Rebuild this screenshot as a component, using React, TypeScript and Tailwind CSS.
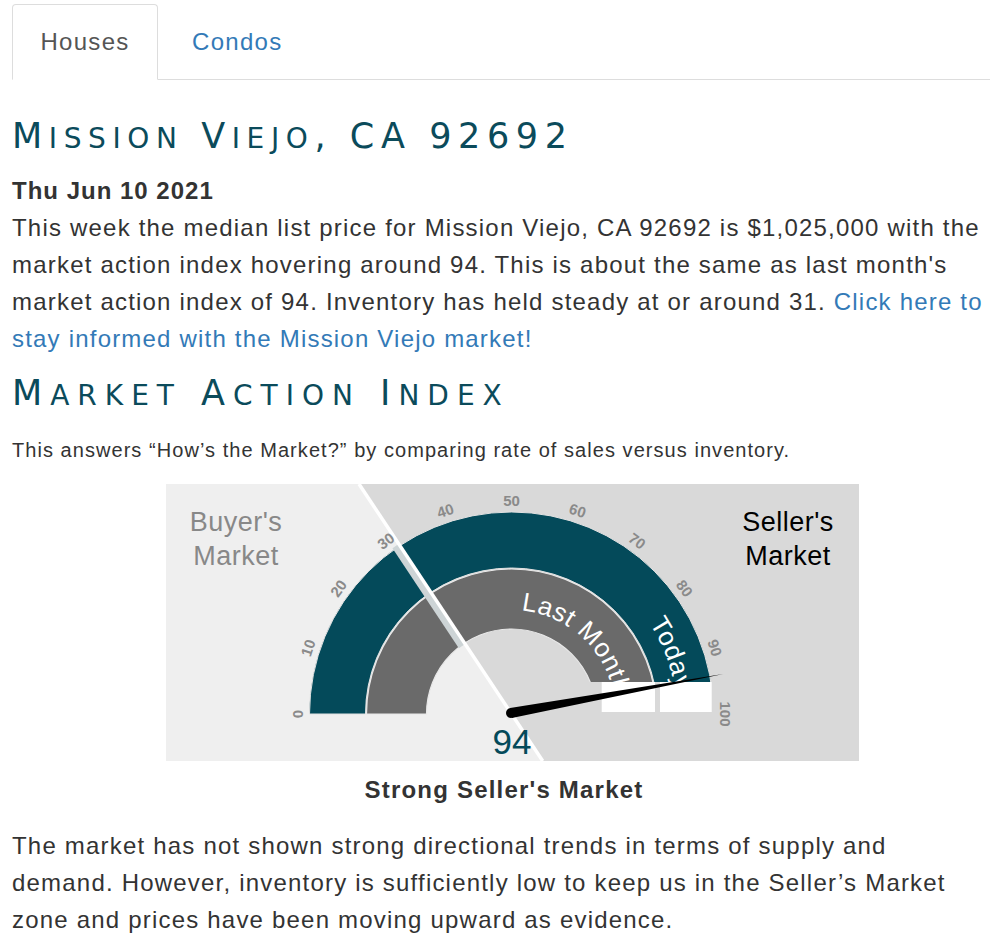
import React from "react";

const TEAL = "#044a5a";
const cx = 345.5;
const cy = 230;

function halfRing(r1: number, r2: number) {
  return `M ${cx - r2} ${cy} A ${r2} ${r2} 0 0 1 ${cx + r2} ${cy} L ${cx + r1} ${cy} A ${r1} ${r1} 0 0 0 ${cx - r1} ${cy} Z`;
}

// clockwise arc used as a text path (left to right over the top)
function arcPath(r: number, fromVal: number) {
  const a = Math.PI - (fromVal / 100) * Math.PI;
  const x = cx + r * Math.cos(a);
  const y = cy - r * Math.sin(a);
  return `M ${x} ${y} A ${r} ${r} 0 0 1 ${cx + r} ${cy}`;
}

function SmallCaps({ text }: { text: string }) {
  const parts = text.split(/([a-z]+)/);
  return (
    <>
      {parts.map((p, i) =>
        /^[a-z]+$/.test(p) ? (
          <span key={i} className="text-[0.8em] uppercase">
            {p}
          </span>
        ) : (
          <span key={i}>{p}</span>
        )
      )}
    </>
  );
}

const FONT = "Liberation Sans, Arial, sans-serif";

function Gauge() {
  const ticks = [0, 10, 20, 30, 40, 50, 60, 70, 80, 90, 100];
  const u = { x: -0.553, y: -0.833 };
  const off = { x: -3.3, y: 2.2 };
  return (
    <svg width="693" height="277" viewBox="0 0 693 277" className="block">
      <defs>
        <path id="lastMonth" d={arcPath(104, 53)} />
        <path id="today" d={arcPath(165, 81.5)} />
      </defs>
      {/* backgrounds */}
      <polygon points="0,0 193,0 376.7,277 0,277" fill="#efefef" />
      <polygon points="193,0 693,0 693,277 376.7,277" fill="#d9d9d9" />

      {/* bands */}
      <path d={halfRing(146, 202)} fill={TEAL} stroke="#e2e2e2" strokeWidth="1" />
      <path d={halfRing(85, 145)} fill="#6a6a6a" stroke="#e8e8e8" strokeWidth="1.2" />

      <text fontFamily={FONT} fontSize="26" letterSpacing="0.6" fill="#fff">
        <textPath href="#lastMonth">Last Month</textPath>
      </text>
      <text fontFamily={FONT} fontSize="26" letterSpacing="0.6" fill="#fff">
        <textPath href="#today">Today</textPath>
      </text>

      {/* bottom right cap */}
      <rect x="420" y="198" width="133" height="34" fill="#d9d9d9" />
      <rect x="435.7" y="198" width="53.3" height="30" fill="#fff" />
      <rect x="494" y="198" width="51.7" height="30" fill="#fff" />

      {/* split line */}
      <line
        x1={cx + u.x * 84 + off.x}
        y1={cy + u.y * 84 + off.y}
        x2={cx + u.x * 204 + off.x}
        y2={cy + u.y * 204 + off.y}
        stroke="#cdd4d6"
        strokeWidth="7"
      />
      <line x1="193" y1="0" x2="376.7" y2="277" stroke="#fff" strokeWidth="3.5" />

      {/* ticks */}
      {ticks.map((v) => {
        const a = Math.PI - (v / 100) * Math.PI;
        const x = cx + 214 * Math.cos(a);
        const y = cy - 214 * Math.sin(a);
        return (
          <text
            key={v}
            x={x}
            y={y}
            transform={`rotate(${v * 1.8 - 90} ${x} ${y})`}
            textAnchor="middle"
            dominantBaseline="central"
            fontFamily={FONT}
            fontWeight="bold"
            fontSize="15"
            fill="#8a8a8a"
          >
            {v}
          </text>
        );
      })}

      {/* market labels */}
      <text x="70" y="47" textAnchor="middle" fontFamily={FONT} fontSize="27" letterSpacing="0.5" fill="#888">
        Buyer's
      </text>
      <text x="70" y="81" textAnchor="middle" fontFamily={FONT} fontSize="27" letterSpacing="0.5" fill="#888">
        Market
      </text>
      <text x="622" y="47" textAnchor="middle" fontFamily={FONT} fontSize="27" letterSpacing="0.5" fill="#000">
        Seller's
      </text>
      <text x="622" y="81" textAnchor="middle" fontFamily={FONT} fontSize="27" letterSpacing="0.5" fill="#000">
        Market
      </text>

      {/* needle */}
      <polygon points="345.9,233.9 557.3,190 344.1,224.1" fill="#000" />
      <circle cx="345" cy="229" r="5" fill="#000" />

      <text x="346" y="270" textAnchor="middle" fontFamily={FONT} fontSize="35" fill={TEAL}>
        94
      </text>
    </svg>
  );
}

export default function App() {
  return (
    <div className="bg-white pl-3 pr-[10px] pb-10 font-['Liberation_Sans',Arial,sans-serif] text-[#333]">
      <div className="flex border-b border-[#ddd] pt-1">
        <div className="-mb-px flex h-[76px] w-[146px] items-center justify-center rounded-t-[4px] border border-[#ddd] border-b-white bg-white text-[24px] tracking-[1.3px] text-[#555]">
          Houses
        </div>
        <div className="ml-[2px] flex h-[75px] items-center px-[32px] text-[24px] tracking-[1.3px] text-[#337ab7]">
          Condos
        </div>
      </div>

      <h1 className="mt-[34px] font-['DejaVu_Sans',sans-serif] text-[35px] leading-[44px] tracking-[6.6px] text-[#0b4b5b]">
        <SmallCaps text="Mission Viejo, CA 92692" />
      </h1>

      <div className="mt-[11px] text-[24px] leading-[37px] font-bold tracking-[1px]">Thu Jun 10 2021</div>
      <p className="text-[24px] leading-[37px] tracking-[1.2px]">
        This week the median list price for Mission Viejo, CA 92692 is $1,025,000 with the market action
        index hovering around 94. This is about the same as last month's market action index of 94.
        Inventory has held steady at or around 31.{" "}
        <a href="#" className="text-[#337ab7]">
          Click here to stay informed with the Mission Viejo market!
        </a>
      </p>

      <h2 className="mt-[14px] font-['DejaVu_Sans',sans-serif] text-[35px] leading-[44px] tracking-[8px] text-[#0b4b5b]">
        <SmallCaps text="Market Action Index" />
      </h2>

      <p className="mt-[19px] text-[20px] leading-[26px] tracking-[1.05px]">
        This answers “How’s the Market?” by comparing rate of sales versus inventory.
      </p>

      <div className="mt-[21px] ml-[154px]">
        <Gauge />
      </div>

      <div className="mt-[14px] pl-[6px] text-center text-[24px] leading-[30px] font-bold tracking-[1.2px]">
        Strong Seller's Market
      </div>

      <p className="mt-[22px] text-[24px] leading-[37px] tracking-[1.2px]">
        The market has not shown strong directional trends in terms of supply and demand. However,
        inventory is sufficiently low to keep us in the Seller’s Market zone and prices have been moving
        upward as evidence.
      </p>
    </div>
  );
}
